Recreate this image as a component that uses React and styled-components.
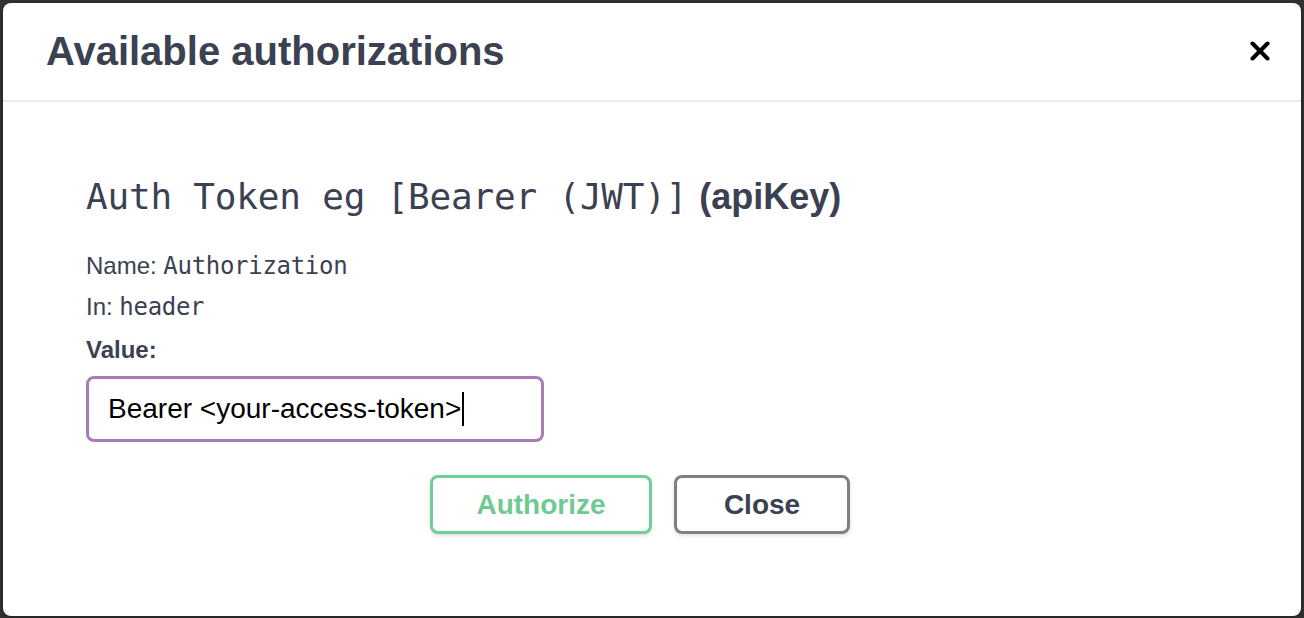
import React from "react";
import styled, { createGlobalStyle } from "styled-components";

const Global = createGlobalStyle`
  html, body { margin: 0; padding: 0; background: #303030; }
  body { font-family: "Liberation Sans", Arial, sans-serif; }
`;

const Backdrop = styled.div`
  width: 1304px;
  height: 618px;
  box-sizing: border-box;
  padding: 3px 3px 2px 3px;
  background: #303030;
`;

const Modal = styled.div`
  height: 100%;
  background: #fff;
  border-radius: 8px;
  box-shadow: 0 1px 3px rgba(0, 0, 0, 0.35);
  display: flex;
  flex-direction: column;
  overflow: hidden;
`;

const Header = styled.div`
  height: 99px;
  flex: none;
  display: flex;
  align-items: center;
  justify-content: space-between;
  padding: 0 31px 2px 43px;
  border-bottom: 2px solid #ebebeb;
  box-sizing: border-box;
`;

const Title = styled.h3`
  margin: 0;
  font-size: 40px;
  font-weight: 700;
  color: #3b4151;
  line-height: 1;
`;

const CloseIcon = styled.button`
  border: 0;
  background: none;
  padding: 0;
  width: 20px;
  height: 20px;
  display: flex;
  cursor: pointer;
`;

const Body = styled.div`
  padding: 73px 0 0 83px;
  display: flex;
  flex-direction: column;
`;

const AuthHeading = styled.h4`
  margin: 0;
  display: flex;
  align-items: baseline;
  gap: 12px;
  color: #3b4151;
  line-height: 44px;
`;

const Code = styled.code`
  font-family: "DejaVu Sans Mono", monospace;
  font-size: 36px;
  font-weight: 400;
  letter-spacing: -0.2px;
`;

const Kind = styled.span`
  font-family: "Liberation Sans", Arial, sans-serif;
  font-size: 36px;
  font-weight: 700;
`;

const Info = styled.p`
  margin: ${(p) => p.$top}px 0 0 0;
  font-size: 24px;
  color: #3b4151;
  line-height: 32px;
`;

const Mono = styled.span`
  font-family: "DejaVu Sans Mono", monospace;
  font-size: 24px;
  letter-spacing: -0.3px;
`;

const Label = styled.label`
  margin-top: 11px;
  font-size: 24px;
  font-weight: 700;
  color: #3b4151;
  line-height: 32px;
`;

const Field = styled.div`
  margin-top: 10px;
  width: 458px;
  height: 66px;
  box-sizing: border-box;
  border: 3px solid #a97cb8;
  border-radius: 8px;
  display: flex;
  align-items: center;
  padding-left: 19px;
  font-size: 28px;
  color: #000;
`;

const Caret = styled.span`
  display: inline-block;
  width: 1.5px;
  height: 34px;
  background: #000;
  margin-left: 1px;
`;

const Actions = styled.div`
  margin-top: 33px;
  display: flex;
  gap: 22px;
  padding-left: 344px;
`;

const Btn = styled.button`
  height: 59px;
  box-sizing: border-box;
  padding: 0;
  width: ${(p) => p.$w}px;
  border: 3px solid ${(p) => p.$border};
  color: ${(p) => p.$color};
  background: #fff;
  border-radius: 8px;
  font-family: "Liberation Sans", Arial, sans-serif;
  font-size: 28px;
  font-weight: 700;
  box-shadow: 0 2px 4px rgba(0, 0, 0, 0.12);
  cursor: pointer;
`;

export default function App() {
  return (
    <>
      <Global />
      <Backdrop>
        <Modal>
          <Header>
            <Title>Available authorizations</Title>
            <CloseIcon aria-label="Close">
              <svg width="20" height="20" viewBox="0 0 20 20">
                <path
                  d="M2.5 2.5 L17.5 17.5 M17.5 2.5 L2.5 17.5"
                  stroke="#000"
                  strokeWidth="4"
                  strokeLinecap="round"
                />
              </svg>
            </CloseIcon>
          </Header>
          <Body>
            <AuthHeading>
              <Code>Auth Token eg [Bearer (JWT)]</Code>
              <Kind>(apiKey)</Kind>
            </AuthHeading>
            <Info $top={31}>
              Name: <Mono>Authorization</Mono>
            </Info>
            <Info $top={9}>
              In: <Mono>header</Mono>
            </Info>
            <Label>Value:</Label>
            <Field>
              Bearer &lt;your-access-token&gt;
              <Caret />
            </Field>
            <Actions>
              <Btn $w={222} $border="#72cc96" $color="#6fca92">Authorize</Btn>
              <Btn $w={176} $border="#808080" $color="#3b4151">Close</Btn>
            </Actions>
          </Body>
        </Modal>
      </Backdrop>
    </>
  );
}
